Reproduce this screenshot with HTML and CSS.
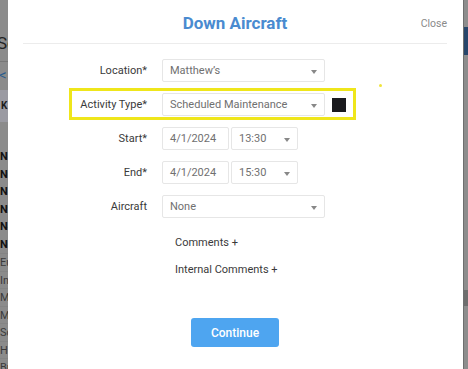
FILE: index.html
```html
<!DOCTYPE html>
<html>
<head>
<meta charset="utf-8">
<link rel="stylesheet" href="styles.css">
</head>
<body>
<div class="page">
  <div class="bg-left">
    <div class="bl-title">Sc</div>
    <div class="bl-line"></div>
    <div class="bl-back">&lt;</div>
    <div class="bl-band">K</div>
    <div class="bl-gap"></div>
    <div class="bl-row b">N1</div>
    <div class="bl-row b">N0</div>
    <div class="bl-row b">N1</div>
    <div class="bl-row b">N2</div>
    <div class="bl-row b">N4</div>
    <div class="bl-row b">N6</div>
    <div class="bl-row l">Eu</div>
    <div class="bl-row l">In</div>
    <div class="bl-row l">M</div>
    <div class="bl-row l">M</div>
    <div class="bl-row l">Sc</div>
    <div class="bl-row l">He</div>
    <div class="bl-row l">Br</div>
  </div>

  <div class="modal">
    <div class="header">
      <div></div>
      <div class="title">Down Aircraft</div>
      <div class="close">Close</div>
    </div>

    <div class="form">
      <div class="row">
        <div class="label">Location*</div>
        <div class="select wide"><span>Matthew’s</span><i class="caret"></i></div>
      </div>

      <div class="row highlight">
        <div class="label">Activity Type*</div>
        <div class="select wide"><span>Scheduled Maintenance</span><i class="caret"></i></div>
        <div class="swatch"></div>
      </div>

      <div class="row">
        <div class="label">Start*</div>
        <div class="input half"><span>4/1/2024</span></div>
        <div class="select half"><span>13:30</span><i class="caret"></i></div>
      </div>

      <div class="row">
        <div class="label">End*</div>
        <div class="input half"><span>4/1/2024</span></div>
        <div class="select half"><span>15:30</span><i class="caret"></i></div>
      </div>

      <div class="row">
        <div class="label">Aircraft</div>
        <div class="select wide"><span>None</span><i class="caret"></i></div>
      </div>

      <div class="link first">Comments +</div>
      <div class="link">Internal Comments +</div>

      <div class="actions">
        <div class="btn">Continue</div>
      </div>
    </div>
    <div class="dot"></div>
  </div>

  <div class="bg-right">
    <div class="br-a"></div>
    <div class="br-b"></div>
    <div class="br-c"></div>
    <div class="br-d"></div>
  </div>
</div>
</body>
</html>
```

FILE: styles.css
```css
html, body {
  margin: 0;
  padding: 0;
  background: #8a8a8a;
}
body {
  font-family: Roboto, "Liberation Sans", sans-serif;
}
.page {
  display: flex;
  width: 468px;
  height: 369px;
  overflow: hidden;
}

/* left background strip */
.bg-left {
  width: 8px;
  flex: none;
  overflow: hidden;
  background: #8b8b8b;
  white-space: nowrap;
  font-size: 11px;
  color: #1c1c1c;
}
.bl-title {
  height: 30px;
  margin-top: 28px;
  font-size: 17px;
  line-height: 30px;
  margin-left: -3px;
  color: #222;
}
.bl-line {
  height: 1px;
  background: #777;
  margin-top: 3px;
}
.bl-back {
  height: 28px;
  line-height: 26px;
  font-size: 15px;
  color: #2b5d8e;
  margin-left: -1px;
}
.bl-band {
  height: 32px;
  line-height: 32px;
  background: #9a9aa2;
  font-weight: bold;
  font-size: 10px;
  padding-left: 1px;
}
.bl-gap { height: 26px; }
.bl-row {
  height: 17.5px;
  line-height: 17.5px;
}
.bl-row.b { font-weight: bold; color: #111; }
.bl-row.l { color: #3a3a3a; border-top: 1px solid #848484; height: 16.5px; }

/* right background strip */
.bg-right {
  width: 5px;
  flex: none;
  background: #8d8d8d;
  border-left: 1px solid #6f6f6f;
  box-sizing: border-box;
}
.br-a { height: 27px; }
.br-b { height: 28px; background: #27466b; }
.br-c { height: 235px; }
.br-d { height: 16px; background: #6e6e6e; }

/* modal */
.modal {
  flex: 1;
  background: #fff;
  padding: 0 16px 0 15px;
  position: relative;
}
.header {
  height: 43px;
  border-bottom: 1px solid #ececec;
  display: grid;
  grid-template-columns: 1fr auto 1fr;
  align-items: center;
}
.title {
  font-size: 17px;
  font-weight: 700;
  color: #4a8bd0;
  padding-top: 2px;
}
.close {
  justify-self: end;
  font-size: 10.5px;
  color: #8a8a8a;
  padding-top: 3px;
}

.form {
  padding-top: 15px;
}
.row {
  display: flex;
  align-items: center;
  height: 23px;
  margin-bottom: 11px;
  position: relative;
}
.row.highlight { margin-top: 1px; margin-bottom: 11px; }
.row.highlight::before {
  content: "";
  position: absolute;
  left: 46px;
  top: -5px;
  width: 287px;
  height: 32px;
  border: 3px solid #efe61b;
  box-sizing: border-box;
}
.label {
  width: 124px;
  margin-right: 15px;
  text-align: right;
  font-size: 11px;
  color: #3a3a3a;
  flex: none;
}
.select, .input {
  height: 23px;
  box-sizing: border-box;
  border: 1px solid #e6e6e6;
  border-radius: 2px;
  display: flex;
  align-items: center;
  padding-left: 7px;
  font-size: 11px;
  color: #707070;
  position: relative;
  flex: none;
}
.wide { width: 163px; }
.half { width: 67px; }
.input.half { margin-right: 2px; }
.caret {
  position: absolute;
  right: 7px;
  top: 10px;
  width: 0;
  height: 0;
  border-left: 3px solid transparent;
  border-right: 3px solid transparent;
  border-top: 4px solid #888;
}
.swatch {
  width: 14px;
  height: 14px;
  background: #1a1a1e;
  margin-left: 7px;
  flex: none;
}
.link {
  font-size: 11px;
  color: #3a3a3a;
  padding-left: 152px;
  height: 14px;
  line-height: 14px;
}
.link.first { margin-top: 18px; }
.link + .link { margin-top: 13px; }
.actions {
  display: flex;
  justify-content: center;
  margin-top: 41px;
}
.btn {
  width: 88px;
  height: 29px;
  background: #4ea5f0;
  border-radius: 3px;
  color: #fff;
  font-size: 12px;
  font-weight: 500;
  display: flex;
  align-items: center;
  justify-content: center;
}
.dot {
  position: absolute;
  left: 371px;
  top: 84px;
  width: 3px;
  height: 3px;
  border-radius: 50%;
  background: #f0e43a;
}
```
